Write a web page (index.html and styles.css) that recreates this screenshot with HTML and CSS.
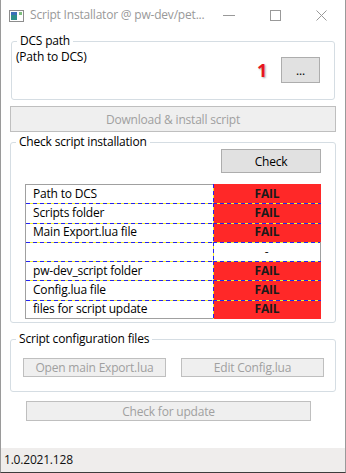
FILE: index.html
```html
<!DOCTYPE html>
<html lang="en">

<head>
	<meta charset="UTF-8">
	<title>Script Installator</title>
	<link rel="stylesheet" href="styles.css">
</head>

<body>
	<div class="window">
		<div class="titlebar">
			<svg class="app-icon" width="15" height="12" viewBox="0 0 15 12">
				<rect x="0.5" y="0.5" width="14" height="11" fill="#fff" stroke="#8d8d8d" />
				<rect x="2" y="2" width="6" height="8" fill="#2e8f8a" />
				<rect x="2" y="2" width="6" height="3" fill="#3a6fb8" />
				<rect x="10" y="2" width="3" height="3" fill="#7fbf7f" />
			</svg>
			<span class="title">Script Installator @ pw-dev/pet...</span>
			<div class="caption-buttons">
				<svg width="12" height="12" viewBox="0 0 12 12"><line x1="0" y1="6.5" x2="12" y2="6.5" stroke="#999" /></svg>
				<svg width="11" height="11" viewBox="0 0 11 11"><rect x="0.5" y="0.5" width="10" height="10" fill="none" stroke="#999" /></svg>
				<svg width="11" height="11" viewBox="0 0 11 11"><path d="M0.5 0.5 L10.5 10.5 M10.5 0.5 L0.5 10.5" stroke="#999" /></svg>
			</div>
		</div>

		<div class="content">
			<fieldset class="group group-path">
				<legend>DCS path</legend>
				<div class="path-row">
					<span class="path-text">(Path to DCS)</span>
					<div class="browse">
						<span class="step">1</span>
						<button class="btn btn-browse">...</button>
					</div>
				</div>
			</fieldset>

			<button class="btn disabled btn-download">Download &amp; install script</button>

			<fieldset class="group group-check">
				<legend>Check script installation</legend>
				<div class="check-row">
					<button class="btn btn-check">Check</button>
				</div>
				<div class="status-table">
					<div class="cell name">Path to DCS</div>
					<div class="cell result fail">FAIL</div>
					<div class="cell name sep">Scripts folder</div>
					<div class="cell result fail sep">FAIL</div>
					<div class="cell name sep">Main Export.lua file</div>
					<div class="cell result fail sep">FAIL</div>
					<div class="cell name sep"></div>
					<div class="cell result empty sep">-</div>
					<div class="cell name sep">pw-dev_script folder</div>
					<div class="cell result fail sep">FAIL</div>
					<div class="cell name sep">Config.lua file</div>
					<div class="cell result fail sep">FAIL</div>
					<div class="cell name sep last">files for script update</div>
					<div class="cell result fail sep">FAIL</div>
				</div>
			</fieldset>

			<fieldset class="group group-config">
				<legend>Script configuration files</legend>
				<div class="config-row">
					<button class="btn disabled">Open main Export.lua</button>
					<button class="btn disabled">Edit Config.lua</button>
				</div>
			</fieldset>

			<button class="btn disabled btn-update">Check for update</button>
		</div>

		<div class="statusbar">1.0.2021.128</div>
	</div>
</body>

</html>
```
FILE: styles.css
```css
:root {
	--font: "Open Sans", "Noto Sans", sans-serif;
	--group-border: #d5dde3;
	--btn-bg: #e1e1e1;
	--btn-border: #adadad;
	--disabled-bg: #efefef;
	--disabled-border: #bfbfbf;
	--disabled-text: #a0a0a0;
	--fail: #ff2828;
	--dash: repeating-linear-gradient(90deg, #2424f0 0 4px, #f4f02c 4px 7px);
	--dash-v: repeating-linear-gradient(180deg, #2424f0 0 4px, #f4f02c 4px 7px);
}

body {
	margin: 0;
	font-family: var(--font);
	font-size: 12px;
	line-height: 16px;
	letter-spacing: -0.2px;
	color: #000;
	background: #fff;
}

.window {
	width: 346px;
	height: 473px;
	box-sizing: border-box;
	border: 1px solid #9a9a9a;
	border-top: none;
	border-bottom-color: #3c3c3c;
	display: flex;
	flex-direction: column;
	background: #fff;
}

.titlebar {
	height: 30px;
	display: flex;
	align-items: center;
	padding-left: 8px;
	flex-shrink: 0;
}

.app-icon {
	margin-top: 2px;
}

.title {
	margin-left: 6px;
	color: #999;
}

.caption-buttons {
	margin-left: auto;
	display: flex;
	align-items: center;
	gap: 35px;
	padding-right: 18px;
}

.content {
	padding: 0 9px;
	display: flex;
	flex-direction: column;
}

/* group boxes */
.group {
	margin: 0;
	border: 1px solid var(--group-border);
	border-radius: 3px;
	padding: 0 4px;
	min-width: 0;
}

.group legend {
	padding: 0 3px;
	margin-left: 1px;
	line-height: 16px;
}

.group-path {
	margin: 3px 1px 0;
}

.path-row {
	height: 50px;
	display: flex;
	justify-content: space-between;
}

.path-text {
	margin-top: 0;
}

.browse {
	display: flex;
	align-items: center;
	align-self: flex-end;
	margin-bottom: 16px;
	margin-right: 10px;
}

.step {
	color: #e8141e;
	font-weight: bold;
	font-size: 18px;
	line-height: 18px;
	text-shadow: 1px 1px 2px rgba(0, 0, 0, 0.35);
	margin-right: 14px;
}

/* buttons */
.btn {
	font-family: var(--font);
	font-size: 12px;
	letter-spacing: -0.2px;
	background: var(--btn-bg);
	border: 1px solid var(--btn-border);
	color: #000;
	padding: 0;
	margin: 0;
}

.btn.disabled {
	background: var(--disabled-bg);
	border-color: var(--disabled-border);
	color: var(--disabled-text);
}

.btn-browse {
	width: 39px;
	height: 26px;
}

.btn-download {
	height: 26px;
	margin-top: 6px;
	margin-bottom: 2px;
}

.check-row {
	display: flex;
	justify-content: flex-end;
	margin-top: -1px;
	padding-right: 10px;
}

.btn-check {
	width: 100px;
	height: 24px;
}

/* status table */
.status-table {
	display: grid;
	grid-template-columns: 188px 108px;
	grid-auto-rows: 19.3px;
	margin: 11px 9px 3px 10px;
}

.cell {
	display: flex;
	align-items: center;
}

.cell.name {
	border-left: 1px solid #a0a0a0;
	padding-left: 7px;
	background: #fff;
}

.cell.name:first-child {
	border-top: 1px solid #a0a0a0;
}

.cell.name.last {
	border-bottom: 1px solid #a0a0a0;
}

.cell.result {
	justify-content: center;
	font-weight: bold;
	color: #1a1a1a;
	background-image: var(--dash-v);
	background-size: 1px 100%;
	background-repeat: no-repeat;
}

.cell.fail {
	background-color: var(--fail);
}

.cell.empty {
	background-color: #fff;
	border-right: 1px solid #a0a0a0;
	font-weight: normal;
}

.cell.sep {
	background-image: var(--dash);
	background-size: 100% 1px;
	background-repeat: no-repeat;
}

.cell.result.sep {
	background-image: var(--dash), var(--dash-v);
	background-size: 100% 1px, 1px 100%;
	background-repeat: no-repeat;
}

/* configuration */
.group-config {
	margin-top: 8px;
}

.config-row {
	display: flex;
	justify-content: space-between;
	padding: 11px 7px 14px 8px;
}

.config-row .btn {
	width: 143px;
	height: 19px;
}

.btn-update {
	width: 285px;
	height: 20px;
	margin: 9px 0 0 16px;
}

.statusbar {
	margin-top: auto;
	height: 24px;
	background: #efedec;
	display: flex;
	align-items: center;
	padding-left: 3px;
	color: #111;
}
```
